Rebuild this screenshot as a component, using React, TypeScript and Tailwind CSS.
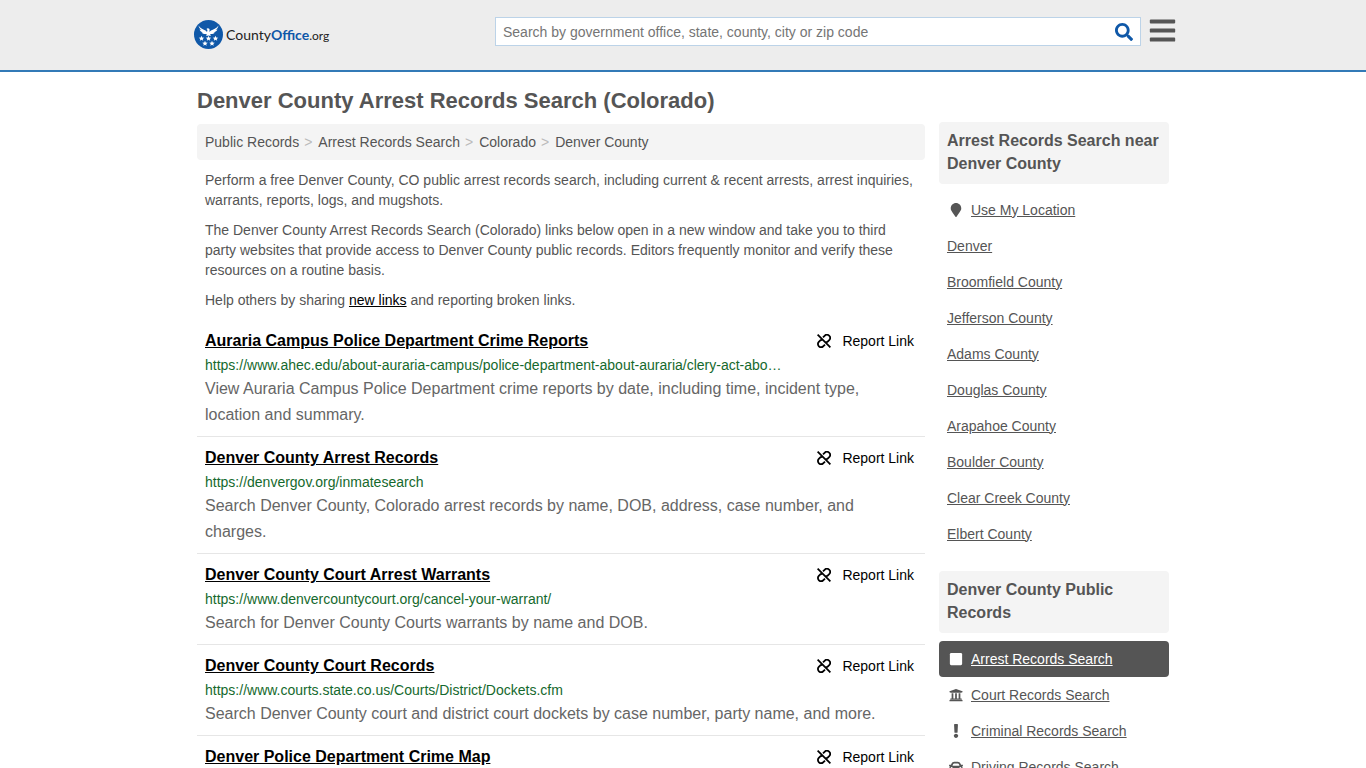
import React, { useState } from 'react';
import { FaBars, FaCar, FaExclamation, FaMapMarker, FaSearch, FaSquare, FaUniversity } from 'react-icons/fa';
import type { IconType } from 'react-icons';

interface RecordLink {
  title: string;
  url?: string;
  description?: string;
}

interface SideLink {
  label: string;
  icon?: IconType;
  active?: boolean;
}

const breadcrumbs = ['Public Records', 'Arrest Records Search', 'Colorado', 'Denver County'];

const records: RecordLink[] = [
  {
    title: 'Auraria Campus Police Department Crime Reports',
    url: 'https://www.ahec.edu/about-auraria-campus/police-department-about-auraria/clery-act-abo…',
    description:
      'View Auraria Campus Police Department crime reports by date, including time, incident type, location and summary.',
  },
  {
    title: 'Denver County Arrest Records',
    url: 'https://denvergov.org/inmatesearch',
    description:
      'Search Denver County, Colorado arrest records by name, DOB, address, case number, and charges.',
  },
  {
    title: 'Denver County Court Arrest Warrants',
    url: 'https://www.denvercountycourt.org/cancel-your-warrant/',
    description: 'Search for Denver County Courts warrants by name and DOB.',
  },
  {
    title: 'Denver County Court Records',
    url: 'https://www.courts.state.co.us/Courts/District/Dockets.cfm',
    description:
      'Search Denver County court and district court dockets by case number, party name, and more.',
  },
  { title: 'Denver Police Department Crime Map' },
];

const nearby: SideLink[] = [
  { label: 'Use My Location', icon: FaMapMarker },
  { label: 'Denver' },
  { label: 'Broomfield County' },
  { label: 'Jefferson County' },
  { label: 'Adams County' },
  { label: 'Douglas County' },
  { label: 'Arapahoe County' },
  { label: 'Boulder County' },
  { label: 'Clear Creek County' },
  { label: 'Elbert County' },
];

const publicRecords: SideLink[] = [
  { label: 'Arrest Records Search', icon: FaSquare, active: true },
  { label: 'Court Records Search', icon: FaUniversity },
  { label: 'Criminal Records Search', icon: FaExclamation },
  { label: 'Driving Records Search', icon: FaCar },
];

const STAR = 'M0-5 1.3-1.7 4.8-1.5 2.1.7 3 4.1 0 2.2-3 4.1-2.1.7-4.8-1.5-1.3-1.7Z';

function Logo() {
  return (
    <a href="#" className="flex items-center gap-[3px]" aria-label="CountyOffice.org">
      <svg viewBox="0 0 58 58" className="h-[29px] w-[29px]" aria-hidden="true">
        <circle cx="29" cy="29" r="29" fill="#0f58a8" />
        {/* eagle */}
        <path
          d="M9 11c4 6 10 8 14 10 2 1 2 2 3 3l1-4-2-2c1-2 4-2 6 0l0 6c1-1 1-2 3-3 4-2 11-4 15-10-1 5-3 7-6 9l4-1c-2 4-5 5-8 6h3c-2 3-5 3-8 3l-2 1 2 3-5-1-5 1 2-3-3-1c-3 0-6-1-8-3h3c-3-1-6-3-7-6l4 1c-3-2-5-4-6-9Z"
          fill="#fff"
        />
        <g fill="#fff">
          {[
            [15, 37],
            [29, 37],
            [43, 37],
            [22, 47],
            [36, 47],
          ].map(([x, y]) => (
            <path key={`${x}-${y}`} d={STAR} transform={`translate(${x} ${y}) scale(1.15)`} />
          ))}
        </g>
      </svg>
      <span className="pt-[2px] font-[Lato,sans-serif] text-[14px] leading-5 text-[#222]">
        County<span className="font-bold text-[#0f58a8]">Office</span>
        <span className="text-[12px]">.org</span>
      </span>
    </a>
  );
}

function BrokenLinkIcon() {
  return (
    <svg
      viewBox="0 0 14 14"
      className="h-[14px] w-[14px]"
      fill="none"
      stroke="currentColor"
      strokeWidth="1.8"
      aria-hidden="true"
    >
      <path d="M.6.6 13.4 13.4" />
      <path d="M6 3.4 7.6 1.8a3.1 3.1 0 0 1 4.6 4.4L10.4 8 8.6 8.2" />
      <path d="M8 10.6 6.4 12.2a3.1 3.1 0 0 1-4.6-4.4L3.6 6 5.4 5.8" />
    </svg>
  );
}

function Header() {
  const [query, setQuery] = useState('');

  return (
    <header className="border-b-2 border-[#337ab7] bg-[#ededed]">
      <div className="mx-auto flex h-[70px] max-w-[980px] items-start">
        <div className="flex-1 pt-5 pl-px">
          <Logo />
        </div>
        <form
          className="mt-[17px] flex h-[29px] w-[646px] items-center border border-[#bcd3e8] bg-white"
          onSubmit={(e) => e.preventDefault()}
        >
          <input
            type="text"
            aria-label="Search"
            value={query}
            onChange={(e) => setQuery(e.target.value)}
            placeholder="Search by government office, state, county, city or zip code"
            className="h-full flex-1 px-[7px] text-[14px] text-[#555] placeholder-[#757575] outline-none"
          />
          <button type="submit" aria-label="Submit search" className="px-[7px] text-[#0f58a8]">
            <FaSearch className="h-[18px] w-[18px]" />
          </button>
        </form>
        <button type="button" aria-label="Menu" className="-mr-[3px] ml-2 pt-4 text-[#555]">
          <FaBars className="h-[29px] w-[27px]" />
        </button>
      </div>
    </header>
  );
}

function RecordItem({ record }: { record: RecordLink }) {
  return (
    <li className="border-b border-[#e6e6e6] px-2 pt-[9px] pb-2">
      <div className="flex items-center justify-between">
        <h2 className="text-[16px] leading-6 font-bold text-black">
          <a href="#" className="underline">
            {record.title}
          </a>
        </h2>
        <a href="#" className="flex items-center gap-[11px] pr-[3px] text-[14px] leading-6 text-black">
          <BrokenLinkIcon />
          Report Link
        </a>
      </div>
      {record.url && <p className="my-px pt-px text-[14px] leading-5 text-[#15692d]">{record.url}</p>}
      {record.description && (
        <p className="pr-8 text-[16px] leading-[26px] text-[#666]">{record.description}</p>
      )}
    </li>
  );
}

function SideSection({ title, links }: { title: string; links: SideLink[] }) {
  return (
    <section className="mb-[19px]">
      <h2 className="mb-2 rounded bg-[#f4f4f4] px-2 pt-[7px] pb-[9px] text-[16px] leading-[23px] font-bold text-[#555]">
        {title}
      </h2>
      <ul>
        {links.map(({ label, icon: Icon, active }) => (
          <li key={label}>
            <a
              href="#"
              className={`flex h-9 items-center rounded px-2 text-[14px] ${
                active ? 'bg-[#555] text-white' : 'text-[#555]'
              }`}
            >
              {Icon && (
                <span className="mr-[6px] flex w-[18px] justify-center">
                  <Icon className="h-[14px] w-[14px]" />
                </span>
              )}
              <span className="underline">{label}</span>
            </a>
          </li>
        ))}
      </ul>
    </section>
  );
}

export default function App() {
  return (
    <div className="h-screen overflow-x-hidden overflow-y-auto bg-white font-['Liberation_Sans',Arial,sans-serif] text-[#555] [scrollbar-width:none]">
      <Header />
      <div className="mx-auto flex max-w-[972px] gap-[14px]">
        <main className="min-w-0 flex-1">
          <h1 className="pt-[17px] pb-[11px] text-[22px] leading-6 font-bold text-[#555]">
            Denver County Arrest Records Search (Colorado)
          </h1>
          <nav aria-label="Breadcrumb" className="rounded bg-[#f4f4f4] px-2">
            <ol className="flex h-9 items-center text-[14px]">
              {breadcrumbs.map((crumb, i) => (
                <li key={crumb}>
                  {i > 0 && <span className="pr-[6px] pl-[5px] text-[#bbb]">&gt;</span>}
                  <a href="#">{crumb}</a>
                </li>
              ))}
            </ol>
          </nav>
          <div className="space-y-[10px] px-2 py-[10px] text-[14px] leading-5">
            <p>
              Perform a free Denver County, CO public arrest records search, including current &amp; recent
              arrests, arrest inquiries, warrants, reports, logs, and mugshots.
            </p>
            <p>
              The Denver County Arrest Records Search (Colorado) links below open in a new window and take you
              to third party websites that provide access to Denver County public records. Editors frequently
              monitor and verify these resources on a routine basis.
            </p>
            <p>
              Help others by sharing{' '}
              <a href="#" className="text-black underline">
                new links
              </a>{' '}
              and reporting broken links.
            </p>
          </div>
          <ul>
            {records.map((record) => (
              <RecordItem key={record.title} record={record} />
            ))}
          </ul>
        </main>
        <aside className="w-[230px] shrink-0 pt-[50px]">
          <SideSection title="Arrest Records Search near Denver County" links={nearby} />
          <SideSection title="Denver County Public Records" links={publicRecords} />
        </aside>
      </div>
    </div>
  );
}
